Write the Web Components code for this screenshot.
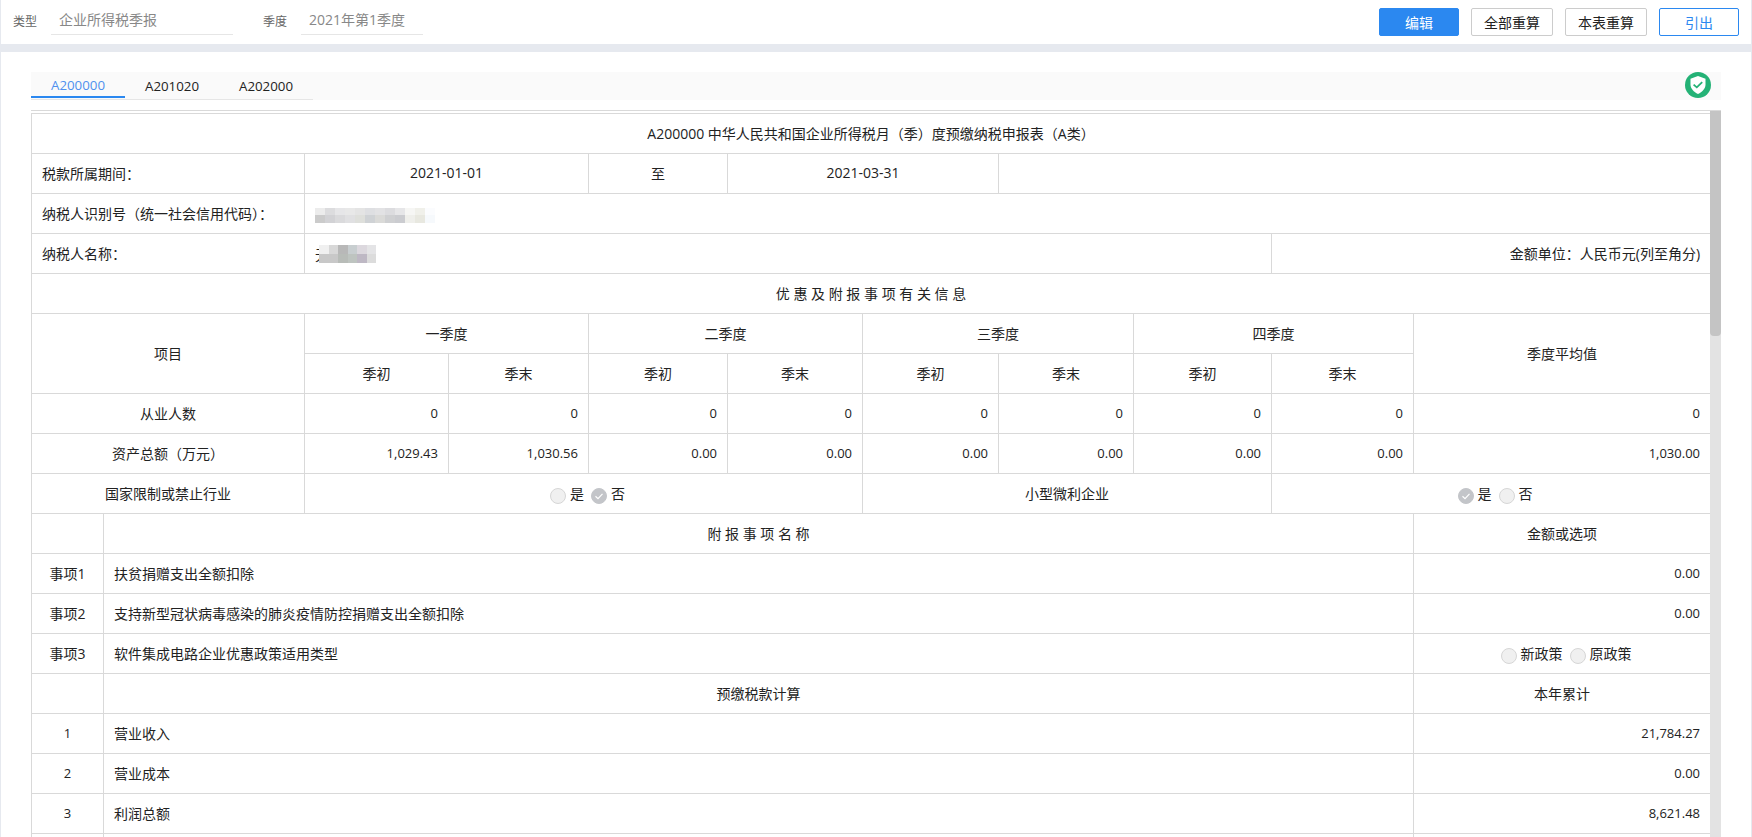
<!DOCTYPE html>
<html lang="zh-CN">
<head>
<meta charset="utf-8">
<title>企业所得税季报</title>
<style>
  html, body { margin: 0; height: 100%; overflow: hidden; }
  body {
    background: #e6e9ef; padding: 0 1px; box-sizing: border-box;
    display: flex; flex-direction: column; gap: 8px;
    font-family: "Open Sans", "Noto Sans CJK SC", sans-serif; color: #222;
  }
</style>
</head>
<body>
  <tax-toolbar></tax-toolbar>
  <tax-panel>
    <tax-tabs></tax-tabs>
    <tax-report></tax-report>
  </tax-panel>

<script>
const toolbarTpl = document.createElement("template");
toolbarTpl.innerHTML = `
  <style>
    :host{ display:flex; align-items:center; height:44px; background:#fff; flex:none; }
    .lbl{ font-size:12px; color:#666; margin-left:12px; width:38px; flex:none; position:relative; top:-1px; }
    .lbl.second{ margin-left:30px; }
    .val{ box-sizing:border-box; height:28px; margin-top:-2px; padding:0 8px; line-height:26px; font-size:14px; color:#888; border-bottom:1px solid #e6e6e6; }
    .type{ width:182px; }
    .season{ width:122px; }
    .btns{ margin-left:auto; margin-right:12px; display:flex; gap:12px; }
    button{
      box-sizing:border-box; height:28px; width:82px; padding:0; border:1px solid #ccc; border-radius:2px;
      background:#fff; color:#222; font:14px "Open Sans", "Noto Sans CJK SC", sans-serif;
    }
    button.primary{ width:80px; background:#2b88f0; border-color:#2b88f0; color:#fff; }
    button.line{ width:80px; border-color:#2b88f0; color:#2b88f0; }
  </style>
  <span class="lbl">类型</span><div class="val type">企业所得税季报</div>
  <span class="lbl second">季度</span><div class="val season">2021年第1季度</div>
  <div class="btns">
    <button class="primary">编辑</button>
    <button>全部重算</button>
    <button>本表重算</button>
    <button class="line">引出</button>
  </div>
`;
class TaxToolbar extends HTMLElement {
  constructor() {
    super();
    this.attachShadow({ mode: "open" }).appendChild(toolbarTpl.content.cloneNode(true));
  }
}
customElements.define("tax-toolbar", TaxToolbar);

class TaxPanel extends HTMLElement {
  constructor() {
    super();
    this.attachShadow({ mode: "open" }).innerHTML = `
      <style>
        :host{ display:flex; flex-direction:column; gap:10px; flex:1; min-height:0; background:#fff; padding:20px 30px 0; }
      </style>
      <slot></slot>`;
  }
}
customElements.define("tax-panel", TaxPanel);

const tabsTpl = document.createElement("template");
tabsTpl.innerHTML = `
  <style>
    :host{ display:flex; justify-content:space-between; height:28px; background:#fafafa; flex:none; }
    .tabs{ display:flex; height:27px; border-bottom:1px solid #e6e6e6; }
    .tab{ box-sizing:border-box; width:94px; height:27px; text-align:center; font-size:13.3px; line-height:28px; color:#222; }
    .tab.on{ color:#4f90ee; border-bottom:2px solid #2b88f0; line-height:26px; height:26px; }
    svg{ display:block; margin:0 10px 0 0; width:26px; height:26px; flex:none; }
  </style>
  <div class="tabs">
    <div class="tab on">A200000</div>
    <div class="tab">A201020</div>
    <div class="tab">A202000</div>
  </div>
  <svg viewBox="0 0 26 26">
    <circle cx="13" cy="13" r="13" fill="#24b276"/>
    <path d="M13 4 L20.5 6.8 V12.5 C20.5 16.8 17.2 19.8 13 22 C8.8 19.8 5.5 16.8 5.5 12.5 V6.8 Z" fill="#fff"/>
    <path d="M8.6 12.6 L11.8 15.4 L17.2 10.2" fill="none" stroke="#24b276" stroke-width="1.8"/>
  </svg>
`;
class TaxTabs extends HTMLElement {
  constructor() {
    super();
    this.attachShadow({ mode: "open" }).appendChild(tabsTpl.content.cloneNode(true));
  }
}
customElements.define("tax-tabs", TaxTabs);

// radio group, options="是,否" checked="否"
class TaxRadio extends HTMLElement {
  constructor() {
    super();
    this.attachShadow({ mode: "open" });
  }
  connectedCallback() {
    const opts = (this.getAttribute("options") || "").split(",");
    const checked = this.getAttribute("checked");
    const items = opts.map(o => `
      <span class="item">
        <span class="dot ${o === checked ? "on" : ""}">${o === checked
          ? '<svg viewBox="0 0 16 16" width="16" height="16"><path d="M4.5 8.2 L7 10.6 L11.5 5.8" fill="none" stroke="#fff" stroke-width="1.2"/></svg>'
          : ""}</span>${o}
      </span>`).join("");
    this.shadowRoot.innerHTML = `
      <style>
        :host{ display:inline-flex; gap:7px; margin-left:8px; vertical-align:middle; }
        .item{ display:inline-flex; align-items:center; gap:4px; }
        .dot{ box-sizing:border-box; width:16px; height:16px; border-radius:50%; background:#f0f0f0; border:1px solid #d6d6d6; position:relative; top:3px; flex:none; }
        .dot.on{ background:#c3c5c9; border-color:#c3c5c9; }
        svg{ display:block; margin:-1px; }
      </style>${items}`;
  }
}
customElements.define("tax-radio", TaxRadio);

// mosaic over a masked value, rows="#aaa,#bbb;#ccc,#ddd"
class TaxMosaic extends HTMLElement {
  constructor() {
    super();
    this.attachShadow({ mode: "open" });
  }
  connectedCallback() {
    const w = this.getAttribute("cell-w") || 10;
    const h = this.getAttribute("cell-h") || 7.5;
    const rows = this.getAttribute("rows").split(";").map(r =>
      `<div class="row">${r.split(",").map(c => `<i style="background:${c}"></i>`).join("")}</div>`
    ).join("");
    this.shadowRoot.innerHTML = `
      <style>
        :host{ display:inline-block; vertical-align:middle; }
        .row{ display:flex; }
        i{ display:block; width:${w}px; height:${h}px; }
      </style>${rows}`;
  }
}
customElements.define("tax-mosaic", TaxMosaic);

const reportTpl = document.createElement("template");
reportTpl.innerHTML = `
  <style>
    :host{ display:flex; flex:1; min-height:0; overflow:hidden; border-top:1px solid #d9d9d9; }
    .view{ flex:1; min-width:0; overflow:hidden; padding-top:2px; }
    table{ border-collapse:collapse; table-layout:fixed; width:1680px; font-size:14px; color:#222; }
    td{ height:40px; box-sizing:border-box; border:1px solid #d9d9d9; padding:0 10px 2px; text-align:center; white-space:nowrap; overflow:hidden; }
    td.l{ text-align:left; }
    td.r{ text-align:right; }
    td.n{ font-size:13px; }
    td.m{ padding-bottom:0; }
    .name{ display:inline-flex; align-items:center; }
    .name tax-mosaic{ margin-left:-10px; }
    .track{ width:11px; flex:none; background:#e3e3e3; }
    .thumb{ height:225px; background:#c4c4c4; border-radius:0 0 4px 4px; }
  </style>
  <div class="view">
    <table>
      <colgroup>
        <col style="width:72px"><col style="width:201px"><col style="width:144px"><col style="width:140px">
        <col style="width:139px"><col style="width:135px"><col style="width:136px"><col style="width:135px">
        <col style="width:138px"><col style="width:142px"><col style="width:297px">
      </colgroup>
      <tr><td colspan="11">A200000 中华人民共和国企业所得税月（季）度预缴纳税申报表（A类）</td></tr>
      <tr><td colspan="2" class="l">税款所属期间：</td><td colspan="2">2021-01-01</td><td>至</td><td colspan="2">2021-03-31</td><td colspan="4"></td></tr>
      <tr><td colspan="2" class="l">纳税人识别号（统一社会信用代码）：</td><td colspan="9" class="l m">
        <tax-mosaic rows="#ececec,#dcdcde,#e6e6e8,#e8e8e8,#e4e4e4,#dedfe2,#e2e2e4,#dcdcdf,#e6e6e8,#f6f6f4,#f0f0ea,#fbfcfe;#cbcbcb,#d2d2d5,#dadadc,#e0e0e2,#dedfdb,#cfd2d5,#dadad8,#cfd0d2,#cbccd0,#efefeb,#e8e8e0,#f6f9fc"></tax-mosaic>
      </td></tr>
      <tr><td colspan="2" class="l">纳税人名称：</td><td colspan="7" class="l m"><span class="name">无<tax-mosaic cell-w="9.5" cell-h="9" rows="#f0f0f0,#d8d8d8,#b8b8b8,#c8ced0,#dcd8de,#e4e4e6;#c8c8c8,#c8c8c8,#b8bcb8,#bec4c0,#beb8c4,#dcdcdc"></tax-mosaic></span></td><td colspan="2" class="r">金额单位：人民币元(列至角分)</td></tr>
      <tr><td colspan="11">优 惠 及 附 报 事 项 有 关 信 息</td></tr>
      <tr><td colspan="2" rowspan="2">项目</td><td colspan="2">一季度</td><td colspan="2">二季度</td><td colspan="2">三季度</td><td colspan="2">四季度</td><td rowspan="2">季度平均值</td></tr>
      <tr><td>季初</td><td>季末</td><td>季初</td><td>季末</td><td>季初</td><td>季末</td><td>季初</td><td>季末</td></tr>
      <tr><td colspan="2">从业人数</td><td class="r n">0</td><td class="r n">0</td><td class="r n">0</td><td class="r n">0</td><td class="r n">0</td><td class="r n">0</td><td class="r n">0</td><td class="r n">0</td><td class="r n">0</td></tr>
      <tr><td colspan="2">资产总额（万元）</td><td class="r n">1,029.43</td><td class="r n">1,030.56</td><td class="r n">0.00</td><td class="r n">0.00</td><td class="r n">0.00</td><td class="r n">0.00</td><td class="r n">0.00</td><td class="r n">0.00</td><td class="r n">1,030.00</td></tr>
      <tr><td colspan="2">国家限制或禁止行业</td><td colspan="4"><tax-radio options="是,否" checked="否"></tax-radio></td><td colspan="3">小型微利企业</td><td colspan="2"><tax-radio options="是,否" checked="是"></tax-radio></td></tr>
      <tr><td></td><td colspan="9">附 报 事 项 名 称</td><td>金额或选项</td></tr>
      <tr><td>事项1</td><td colspan="9" class="l">扶贫捐赠支出全额扣除</td><td class="r n">0.00</td></tr>
      <tr><td>事项2</td><td colspan="9" class="l">支持新型冠状病毒感染的肺炎疫情防控捐赠支出全额扣除</td><td class="r n">0.00</td></tr>
      <tr><td>事项3</td><td colspan="9" class="l">软件集成电路企业优惠政策适用类型</td><td><tax-radio options="新政策,原政策"></tax-radio></td></tr>
      <tr><td></td><td colspan="9">预缴税款计算</td><td>本年累计</td></tr>
      <tr><td class="n">1</td><td colspan="9" class="l">营业收入</td><td class="r n">21,784.27</td></tr>
      <tr><td class="n">2</td><td colspan="9" class="l">营业成本</td><td class="r n">0.00</td></tr>
      <tr><td class="n">3</td><td colspan="9" class="l">利润总额</td><td class="r n">8,621.48</td></tr>
      <tr><td></td><td colspan="9"></td><td></td></tr>
    </table>
  </div>
  <div class="track"><div class="thumb"></div></div>
`;
class TaxReport extends HTMLElement {
  constructor() {
    super();
    this.attachShadow({ mode: "open" }).appendChild(reportTpl.content.cloneNode(true));
  }
}
customElements.define("tax-report", TaxReport);
</script>
</body>
</html>
